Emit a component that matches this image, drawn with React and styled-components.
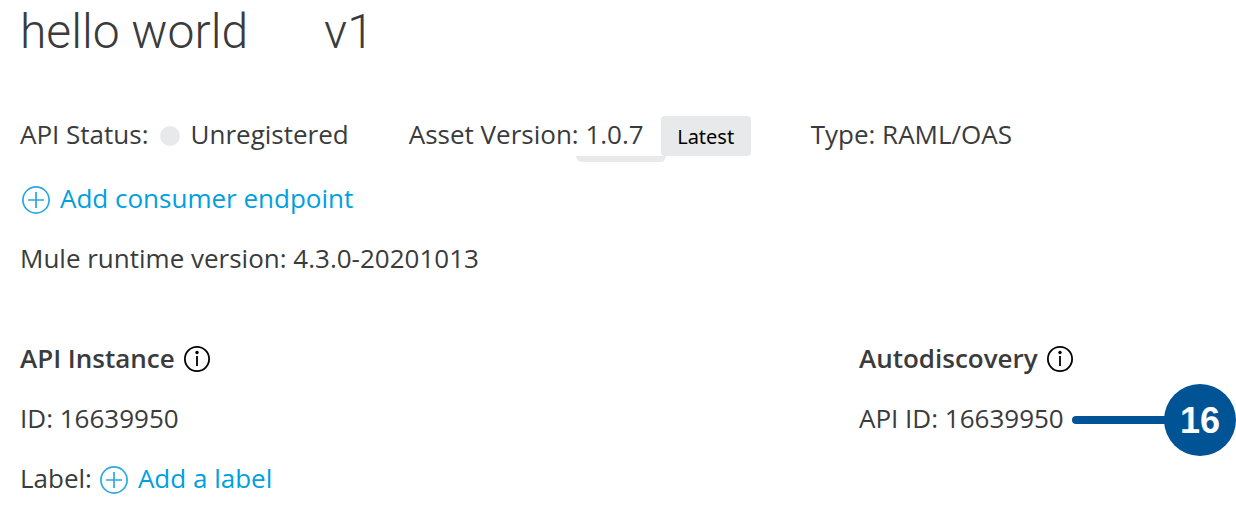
import React from "react";
import styled, { createGlobalStyle } from "styled-components";

const GlobalStyle = createGlobalStyle`
  * { box-sizing: border-box; }
  body {
    margin: 0;
    background: #fff;
    color: #3a3b3c;
    font-family: "Open Sans", "Noto Sans", sans-serif;
    font-size: 26px;
    line-height: 36px;
  }
`;

const Page = styled.main`
  padding: 4px 0 12px 20px;
`;

const Title = styled.h1`
  display: flex;
  gap: 76px;
  margin: 0 0 56px;
  font-family: Roboto, sans-serif;
  font-size: 48px;
  font-weight: 300;
  line-height: 56px;
`;

const StatusRow = styled.div`
  display: flex;
  gap: 60px;
  margin-bottom: 24px;
  white-space: nowrap;
`;

const Field = styled.div`
  display: flex;
  align-items: center;
  gap: ${({ $gap }) => $gap || 8}px;
  height: 40px;
`;

const Text = styled.span`
  padding-bottom: 4px;
`;

const Dot = styled.span`
  width: 20px;
  height: 20px;
  margin: 0 3px;
  border-radius: 50%;
  background: #e8e9ea;
`;

const Version = styled(Text)`
  position: relative;
`;

const VersionShade = styled.span`
  position: absolute;
  right: -22px;
  bottom: -6px;
  width: 90px;
  height: 6px;
  border-radius: 0 0 6px 6px;
  background: #e8e9ea;
`;

const Tag = styled.span`
  min-width: 90px;
  padding: 2px 14px 0;
  border-radius: 4px;
  background: #e8e9ea;
  color: #000;
  font-family: "Noto Sans", sans-serif;
  font-size: 20px;
  line-height: 38px;
  text-align: center;
`;

const AddButton = styled.button`
  display: flex;
  align-items: center;
  gap: 8px;
  height: 40px;
  padding: 0;
  border: 0;
  background: none;
  color: #00a0df;
  font: inherit;
  cursor: pointer;
`;

const Runtime = styled.p`
  margin: 20px 0 60px;
  padding-bottom: 4px;
`;

const Columns = styled.div`
  display: grid;
  grid-template-columns: minmax(0, 839fr) minmax(0, 377fr);
`;

const Section = styled.section`
  display: flex;
  flex-direction: column;
  gap: 20px;
  white-space: nowrap;
`;

const Heading = styled.h2`
  display: flex;
  align-items: center;
  gap: 8px;
  height: 40px;
  margin: 0;
  font-size: 26px;
  font-weight: 600;
`;

const Callout = styled.span`
  display: flex;
  flex: 1;
  align-items: center;
`;

const Leader = styled.span`
  flex: 1;
  height: 8px;
  margin-right: -4px;
  border-radius: 4px;
  background: #005495;
`;

const Badge = styled.span`
  flex: none;
  width: 72px;
  height: 72px;
  border-radius: 50%;
  background: #005495;
  color: #fff;
  font-family: "Liberation Sans", Arial, sans-serif;
  font-size: 36px;
  font-weight: 700;
  line-height: 74px;
  text-align: center;
`;

function PlusIcon() {
  return (
    <svg width="32" height="32" viewBox="0 0 32 32" fill="none" stroke="#2ba9e1" strokeWidth="1.7" aria-hidden="true">
      <circle cx="16" cy="16" r="13.1" />
      <path d="M16 8v16M8 16h16" />
    </svg>
  );
}

function InfoIcon() {
  return (
    <svg width="28" height="28" viewBox="0 0 28 28" fill="none" stroke="#000" strokeWidth="1.8" aria-hidden="true">
      <circle cx="14" cy="13" r="12.1" />
      <path d="M14 10v10" />
      <circle cx="14" cy="6.5" r="1.7" fill="#000" stroke="none" />
    </svg>
  );
}

export default function App() {
  return (
    <>
      <GlobalStyle />
      <Page>
        <Title>
          <span>hello world</span>
          <span>v1</span>
        </Title>
        <StatusRow>
          <Field>
            <Text>API Status:</Text>
            <Dot />
            <Text>Unregistered</Text>
          </Field>
          <Field $gap={17}>
            <Version>
              Asset Version: 1.0.7
              <VersionShade />
            </Version>
            <Tag>Latest</Tag>
          </Field>
          <Field>
            <Text>Type: RAML/OAS</Text>
          </Field>
        </StatusRow>
        <AddButton type="button">
          <PlusIcon />
          <Text>Add consumer endpoint</Text>
        </AddButton>
        <Runtime>Mule runtime version: 4.3.0-20201013</Runtime>
        <Columns>
          <Section>
            <Heading>
              <Text>API Instance</Text>
              <InfoIcon />
            </Heading>
            <Field>
              <Text>ID: 16639950</Text>
            </Field>
            <Field $gap={6}>
              <Text>Label:</Text>
              <AddButton type="button">
                <PlusIcon />
                <Text>Add a label</Text>
              </AddButton>
            </Field>
          </Section>
          <Section>
            <Heading>
              <Text>Autodiscovery</Text>
              <InfoIcon />
            </Heading>
            <Field>
              <Text>API ID: 16639950</Text>
              <Callout>
                <Leader />
                <Badge>16</Badge>
              </Callout>
            </Field>
          </Section>
        </Columns>
      </Page>
    </>
  );
}
